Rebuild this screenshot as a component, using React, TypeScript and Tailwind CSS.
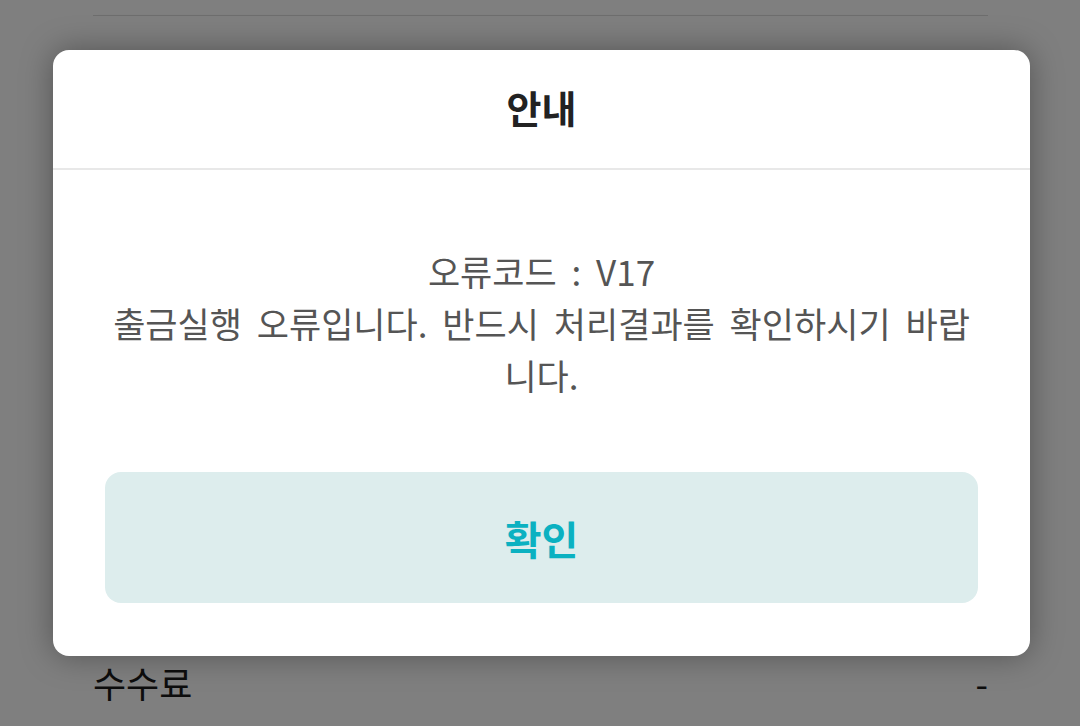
import React from 'react';

const font = { fontFamily: '"Noto Sans CJK KR", "Noto Sans", sans-serif' };

function BackgroundPage() {
  return (
    <div className="flex h-[726px] flex-col bg-white pl-[93px] pr-[92px] pb-[22px]">
      <div className="h-[16px] border-b border-[#dcdcdc]" />
      <div className="flex-1" />
      <div className="flex h-[44px] items-center justify-between text-[36px] text-[#1a1a1a]">
        <span>수수료</span>
        <span>-</span>
      </div>
    </div>
  );
}

function AlertModal() {
  return (
    <div className="absolute inset-0 bg-black/50 pt-[50px] pl-[53px] pr-[50px]">
      <div className="overflow-hidden rounded-[16px] bg-white shadow-[0_0_32px_rgba(0,0,0,0.35)]">
        <div className="flex h-[120px] items-center justify-center border-b-2 border-[#e8e8e8] pb-[4px]">
          <h2 className="text-[38px] font-bold leading-none text-[#222222]">안내</h2>
        </div>
        <div className="px-[52px] pt-[75px] pb-[53px]">
          <p className="text-center text-[35px] leading-[52px] text-[#555555] [word-spacing:7px]">
            오류코드 : V17
            <br />
            출금실행 오류입니다. 반드시 처리결과를 확인하시기 바랍니다.
          </p>
          <button className="mt-[71px] flex h-[131px] w-full items-center justify-center rounded-[16px] bg-[#ddeded] text-[40px] font-bold text-[#0bb1c1]">
            확인
          </button>
        </div>
      </div>
    </div>
  );
}

export default function App() {
  return (
    <div className="relative h-[726px] w-[1080px] overflow-hidden" style={font}>
      <BackgroundPage />
      <AlertModal />
    </div>
  );
}
